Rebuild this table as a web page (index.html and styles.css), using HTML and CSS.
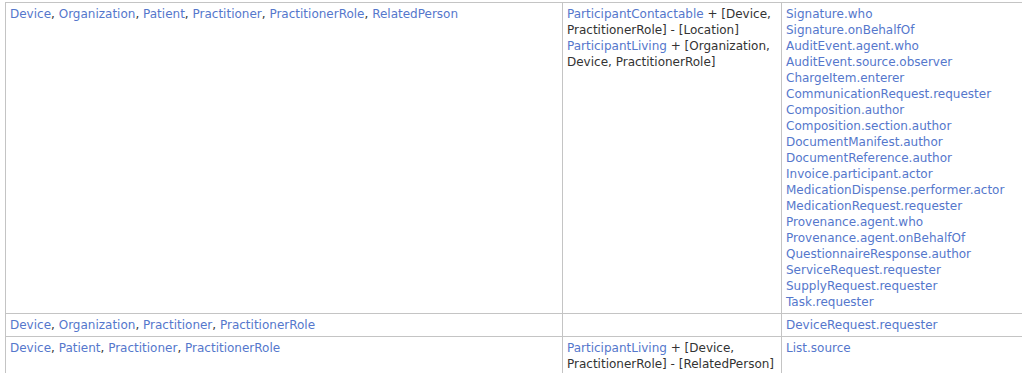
FILE: index.html
```html
<!DOCTYPE html>
<html>
<head>
<meta charset="utf-8">
<link rel="stylesheet" href="styles.css">
</head>
<body>
<table class="grid">
  <tr>
    <td class="c1"><a href="#">Device</a>, <a href="#">Organization</a>, <a href="#">Patient</a>, <a href="#">Practitioner</a>, <a href="#">PractitionerRole</a>, <a href="#">RelatedPerson</a></td>
    <td class="c2"><a href="#">ParticipantContactable</a> + [Device, PractitionerRole] - [Location]<br><a href="#">ParticipantLiving</a> + [Organization, Device, PractitionerRole]</td>
    <td class="c3"><a href="#">Signature.who</a><br><a href="#">Signature.onBehalfOf</a><br><a href="#">AuditEvent.agent.who</a><br><a href="#">AuditEvent.source.observer</a><br><a href="#">ChargeItem.enterer</a><br><a href="#">CommunicationRequest.requester</a><br><a href="#">Composition.author</a><br><a href="#">Composition.section.author</a><br><a href="#">DocumentManifest.author</a><br><a href="#">DocumentReference.author</a><br><a href="#">Invoice.participant.actor</a><br><a href="#">MedicationDispense.performer.actor</a><br><a href="#">MedicationRequest.requester</a><br><a href="#">Provenance.agent.who</a><br><a href="#">Provenance.agent.onBehalfOf</a><br><a href="#">QuestionnaireResponse.author</a><br><a href="#">ServiceRequest.requester</a><br><a href="#">SupplyRequest.requester</a><br><a href="#">Task.requester</a></td>
  </tr>
  <tr>
    <td class="c1"><a href="#">Device</a>, <a href="#">Organization</a>, <a href="#">Practitioner</a>, <a href="#">PractitionerRole</a></td>
    <td class="c2"></td>
    <td class="c3"><a href="#">DeviceRequest.requester</a></td>
  </tr>
  <tr>
    <td class="c1"><a href="#">Device</a>, <a href="#">Patient</a>, <a href="#">Practitioner</a>, <a href="#">PractitionerRole</a></td>
    <td class="c2"><a href="#">ParticipantLiving</a> + [Device, PractitionerRole] - [RelatedPerson]</td>
    <td class="c3"><a href="#">List.source</a></td>
  </tr>
</table>
</body>
</html>
```

FILE: styles.css
```css
html, body {
  margin: 0;
  padding: 0;
  background: #fff;
}
body {
  padding: 2px 0 0 5px;
  font-family: "DejaVu Sans", Verdana, sans-serif;
  font-size: 12px;
  line-height: 16px;
  color: #333;
  overflow: hidden;
}
.grid {
  border-collapse: collapse;
  table-layout: fixed;
  width: 1040px;
}
.grid td {
  border: 1px solid #c4c4c4;
  padding: 3px 4px;
  vertical-align: top;
}
.grid .c1 { width: 548px; }
.grid .c2 { width: 210px; }
.grid .c3 { width: 260px; }
a {
  color: #5577cc;
  text-decoration: none;
}
```
